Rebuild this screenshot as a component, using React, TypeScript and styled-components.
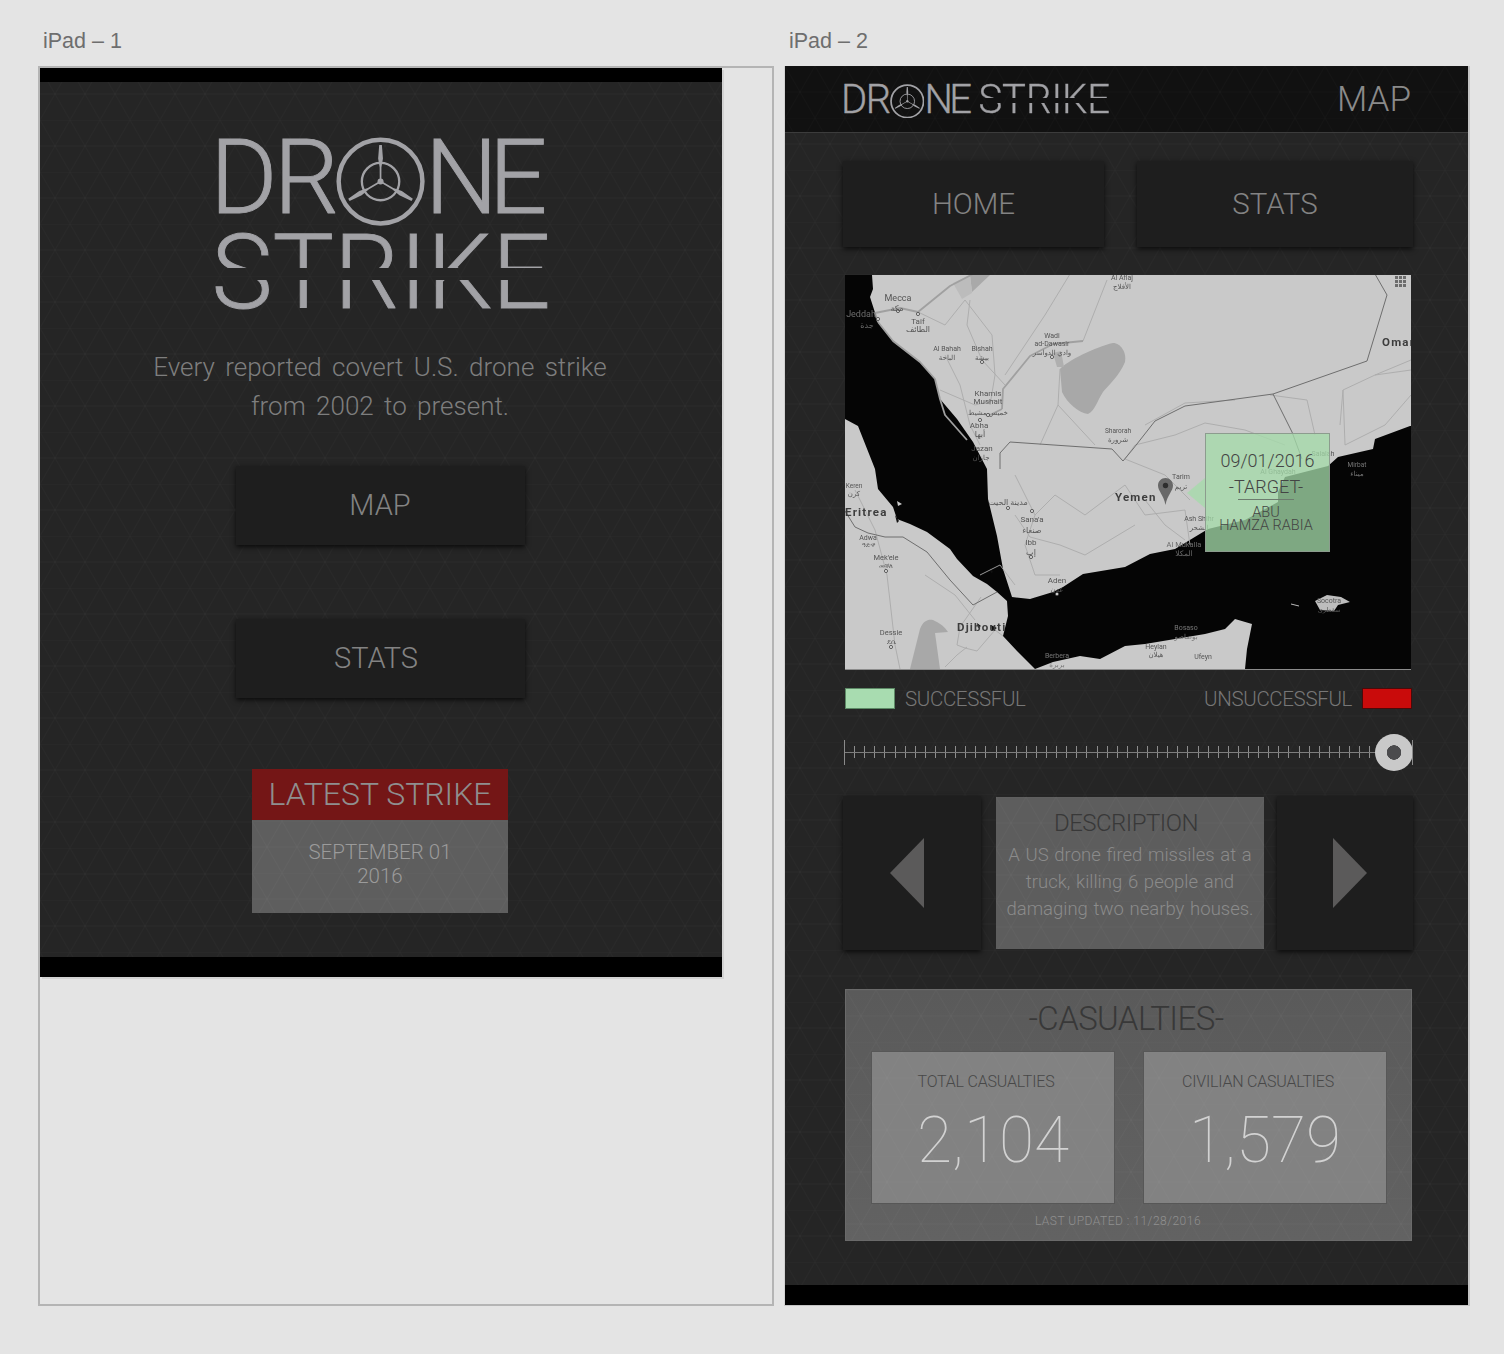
import React from "react";
import styled, { createGlobalStyle } from "styled-components";

const lattice = (alpha: number) =>
  `url("data:image/svg+xml,%3Csvg xmlns='http://www.w3.org/2000/svg' width='30' height='52'%3E%3Cpath d='M0 0L15 26L0 52M30 0L15 26L30 52M0 26H30M0 0H30' fill='none' stroke='%23fff' stroke-opacity='${alpha}'/%3E%3C/svg%3E")`;

const sans = `Roboto, "Liberation Sans", sans-serif`;

const GlobalStyle = createGlobalStyle`
  html, body {
    margin: 0;
    background: #e4e4e4;
  }
  body {
    font-family: ${sans};
  }
`;

const Page = styled.div`
  width: 1504px;
  height: 1354px;
  display: flex;
  padding-left: 38px;
  gap: 10px;
  box-sizing: border-box;
  overflow: hidden;
`;

const Board = styled.section<{ $width: number }>`
  width: ${p => p.$width}px;
  display: flex;
  flex-direction: column;
`;

const BoardName = styled.div`
  height: 66px;
  box-sizing: border-box;
  padding: 29px 0 0 5px;
  font-family: "Liberation Sans", sans-serif;
  font-size: 21.5px;
  line-height: 24px;
  color: #6e6e6e;
`;

const FrameOne = styled.div`
  height: 1240px;
  box-sizing: border-box;
  border: 2px solid #b4b4b4;
`;

const FrameTwo = styled.div`
  height: 1240px;
  box-sizing: border-box;
  border-left: 1px solid #d2d2d2;
  border-right: 2px solid #c4c4c4;
  border-bottom: 1px solid #c4c4c4;
`;

const Screen = styled.div`
  background-color: #252525;
  background-image: ${lattice(0.018)};
  display: flex;
  flex-direction: column;
`;

const HomeScreen = styled(Screen)`
  width: 682px;
  height: 909px;
  box-shadow: 2px 2px 0 #d2d2d2;
`;

const MapScreen = styled(Screen)`
  height: 100%;
`;

const BlackBar = styled.div<{ $height: number }>`
  height: ${p => p.$height}px;
  background: #000;
  flex: none;
`;

const HomeBody = styled.div`
  flex: 1;
  display: flex;
  flex-direction: column;
  align-items: center;
  padding-right: 2px;
`;

/* logo: the letters stay text, the STRIKE band is cut by a gradient clip */
const LogoBox = styled.div<{ $size: number; $row?: boolean }>`
  font-size: ${p => p.$size}px;
  display: flex;
  flex-direction: ${p => (p.$row ? "row" : "column")};
  align-items: center;
  font-weight: 300;
  color: #a2a2a6;
  line-height: 0.94;
  -webkit-text-stroke: 0.009em #a2a2a6;
`;

const DroneLine = styled.div<{ $row?: boolean }>`
  display: flex;
  align-items: center;
  height: 0.94em;
  margin-right: ${p => (p.$row ? 0 : 0.136)}em;
`;

const DroneLetters = styled.span<{ $spacing: number }>`
  letter-spacing: ${p => p.$spacing}em;
`;

const StrikeLine = styled.div<{ $row?: boolean }>`
  margin: ${p => (p.$row ? "0 0 0 0.25em" : "-0.02em 0 0")};
  height: 0.94em;
  color: transparent;
  -webkit-text-stroke: 0.009em transparent;
  background: linear-gradient(#a2a2a6 0 44%, transparent 44% 57%, #a2a2a6 57%);
  -webkit-background-clip: text;
  background-clip: text;
`;

const Wheel = styled.svg`
  width: 0.865em;
  height: 0.865em;
  margin-top: 0.06em;
  flex: none;
`;

const Blade = () => <path d="M48.500 9H51.500L52.700 24L51 34L50.900 50H49.100L49 34L47.300 24Z" />;

const PropellerMark = () => (
  <Wheel viewBox="0 0 100 100" fill="#a2a2a6">
    <circle cx="50" cy="50" r="47" fill="none" stroke="#a2a2a6" strokeWidth="5" />
    <circle cx="50" cy="50" r="21" fill="none" stroke="#a2a2a6" strokeWidth="2.600" />
    <Blade />
    <g transform="rotate(120 50 50)">
      <Blade />
    </g>
    <g transform="rotate(240 50 50)">
      <Blade />
    </g>
    <circle cx="50" cy="50" r="3.400" />
  </Wheel>
);

const Logo = ({ size, row }: { size: number; row?: boolean }) => (
  <LogoBox $size={size} $row={row}>
    <DroneLine $row={row}>
      <DroneLetters $spacing={-0.035}>DR</DroneLetters>
      <PropellerMark />
      <DroneLetters $spacing={-0.09}>NE</DroneLetters>
    </DroneLine>
    <StrikeLine $row={row}>STRIKE</StrikeLine>
  </LogoBox>
);

const HomeLogo = styled.div`
  margin: 48px 0 0 2px;
`;

const Tagline = styled.p`
  margin: 26px 0 0;
  font-size: 26px;
  font-weight: 300;
  line-height: 39px;
  word-spacing: 4px;
  text-align: center;
  color: #7e7e7e;
`;

const DarkButton = styled.div`
  background: #1e1e1e;
  box-shadow: 0 2px 5px rgba(0, 0, 0, 0.75);
  display: flex;
  align-items: center;
  justify-content: center;
  color: #838383;
  font-weight: 300;
  box-sizing: border-box;
`;

const HomeButton = styled(DarkButton)<{ $top: number; $nudge?: number }>`
  width: 289px;
  height: 79px;
  margin-top: ${p => p.$top}px;
  padding-right: ${p => p.$nudge || 0}px;
  font-size: 29px;
`;

const LatestCard = styled.div`
  width: 256px;
  height: 144px;
  margin-top: 71px;
  display: flex;
  flex-direction: column;
  background-color: #5e5e5e;
  background-image: ${lattice(0.025)};
`;

const LatestHead = styled.div`
  height: 51px;
  background: #741616;
  color: #8f8f8f;
  font-size: 32px;
  font-weight: 300;
  display: flex;
  align-items: center;
  justify-content: center;
`;

const LatestDate = styled.div`
  padding-top: 20px;
  text-align: center;
  font-size: 20.5px;
  line-height: 24px;
  font-weight: 300;
  color: #9b9b9b;
`;

const AppBar = styled.header`
  height: 67px;
  flex: none;
  box-sizing: border-box;
  padding: 2px 57px 0 56px;
  background-color: #111;
  background-image: ${lattice(0.015)};
  border-bottom: 1px solid #3c3c3c;
  display: flex;
  align-items: center;
  justify-content: space-between;
`;

const AppBarTitle = styled.div`
  font-size: 35px;
  font-weight: 300;
  color: #8a8a8a;
  margin-bottom: 2px;
`;

const MapBody = styled.div`
  width: 570px;
  margin-left: 58px;
  display: flex;
  flex-direction: column;
  flex: 1;
`;

const NavRow = styled.nav`
  display: flex;
  gap: 33px;
  margin-top: 28px;
`;

const NavButton = styled(DarkButton)<{ $width: number }>`
  width: ${p => p.$width}px;
  height: 86px;
  font-size: 29.5px;
`;

const MapFrame = styled.div`
  position: relative;
  width: 566px;
  height: 395px;
  margin: 28px 0 0 2px;
  flex: none;
  background: #c9c9c9;
  border-bottom: 1px solid #8c8c8c;
  box-sizing: border-box;
`;

const MapDrawing = styled.svg`
  display: block;
  width: 566px;
  height: 394px;
  filter: blur(0.35px);
`;

const Callout = styled.div`
  position: absolute;
  left: 360px;
  top: 158px;
  width: 125px;
  height: 119px;
  box-sizing: border-box;
  border: 1px solid #8c9c8e;
  background: rgba(164, 219, 170, 0.76);
  color: #444;
  text-align: center;
  font-weight: 300;
  padding-top: 16px;

  &::before {
    content: "";
    position: absolute;
    left: -19px;
    top: 44px;
    width: 18px;
    height: 30px;
    background: rgba(164, 219, 170, 0.76);
    clip-path: polygon(0 50%, 100% 0, 100% 100%);
  }
`;

const CalloutDate = styled.div`
  font-size: 18px;
  line-height: 22px;
`;

const CalloutTarget = styled.div`
  width: 56px;
  margin: 3px 0 0 32px;
  font-size: 18px;
  line-height: 24px;
  white-space: nowrap;
  display: flex;
  justify-content: center;
  border-bottom: 1px solid #6c7c6e;
`;

const CalloutName = styled.div`
  font-size: 14.5px;
  line-height: 13px;
  margin-top: 6px;
  padding-right: 3px;
`;

const Legend = styled.div`
  display: flex;
  align-items: center;
  gap: 10px;
  margin: 18px 1px 0 2px;
  height: 21px;
  font-size: 20.5px;
  font-weight: 300;
  letter-spacing: -0.35px;
  color: #777;
`;

const Swatch = styled.span<{ $fill: string; $edge: string }>`
  width: 50px;
  height: 21px;
  box-sizing: border-box;
  background: ${p => p.$fill};
  border: 1px solid ${p => p.$edge};
`;

const LegendGap = styled.span`
  flex: 1;
`;

const Slider = styled.div`
  position: relative;
  width: 569px;
  height: 25px;
  margin: 31px 0 0 1px;
  flex: none;
  background:
    linear-gradient(#7d7d7d, #7d7d7d) 0 12px / 100% 1px no-repeat,
    repeating-linear-gradient(90deg, #8d8d8d 0 1px, transparent 1px 10.1px) 0 6px / 100% 12px no-repeat;

  &::before,
  &::after {
    content: "";
    position: absolute;
    top: 0;
    width: 1px;
    height: 25px;
    background: #8a8a8a;
  }
  &::before {
    left: 0;
  }
  &::after {
    right: 0;
  }
`;

const SliderThumb = styled.div`
  position: absolute;
  right: 0;
  top: -6px;
  width: 38px;
  height: 37px;
  box-sizing: border-box;
  border-radius: 50%;
  background: radial-gradient(circle, #4b4b4d 0 7px, #c9c9c9 7.5px);
`;

const Carousel = styled.div`
  display: flex;
  margin-top: 31px;
  height: 154px;
  flex: none;
`;

const ArrowButton = styled(DarkButton)<{ $width: number; $side: "left" | "right" }>`
  width: ${p => p.$width}px;
  flex: none;
  padding-${p => (p.$side === "left" ? "right" : "left")}: 10px;
`;

const Triangle = styled.svg`
  width: 34px;
  height: 70px;
  fill: #5b5a5a;
`;

const Description = styled.div`
  width: 268px;
  height: 152px;
  margin: 1px 13px 0 15px;
  flex: none;
  box-sizing: border-box;
  padding-top: 11px;
  background-color: #5d5d5d;
  background-image: ${lattice(0.025)};
  text-align: center;
`;

const DescriptionTitle = styled.div`
  font-size: 24px;
  line-height: 30px;
  font-weight: 300;
  letter-spacing: -0.5px;
  margin-right: 8px;
  color: #383838;
`;

const DescriptionText = styled.div`
  margin-top: 4px;
  font-size: 18.5px;
  line-height: 27px;
  font-weight: 300;
  word-spacing: 1.2px;
  color: #8b8b8b;
  white-space: nowrap;
`;

const CasualtyPanel = styled.div`
  width: 567px;
  height: 252px;
  margin: 39px 0 0 2px;
  flex: none;
  box-sizing: border-box;
  padding: 10px 24px 0 25px;
  background-color: #5b5b5b;
  background-image: ${lattice(0.025)}, linear-gradient(#5a5a5a, #626262);
  border: 1px solid #6a6a6a;
`;

const PanelTitle = styled.div`
  font-size: 33px;
  line-height: 38px;
  font-weight: 300;
  letter-spacing: -0.6px;
  text-align: center;
  margin-right: 6px;
  color: #383838;
`;

const CardRow = styled.div`
  display: flex;
  gap: 28px;
  margin-top: 13px;
`;

const CasualtyCard = styled.div`
  width: 244px;
  height: 153px;
  box-sizing: border-box;
  border: 1px solid #575757;
  padding-top: 20px;
  background-color: #828282;
  background-image: ${lattice(0.02)};
  text-align: center;
`;

const CardLabel = styled.div`
  font-size: 16px;
  line-height: 20px;
  font-weight: 300;
  letter-spacing: -0.2px;
  color: #484848;
  margin-right: 14px;
`;

const CardNumber = styled.div`
  margin-top: 11px;
  font-size: 64px;
  line-height: 76px;
  font-weight: 100;
  color: #d2d2d2;
`;

const Updated = styled.div`
  margin: 9px 22px 0 0;
  font-size: 12px;
  line-height: 16px;
  font-weight: 300;
  letter-spacing: 0.5px;
  text-align: center;
  color: #909090;
`;

const BottomBar = styled(BlackBar)`
  margin-top: auto;
`;

const seaPath =
  "M0 0L27 0L28 14L25 22L33 47L48 66L75 87L90 104L95 124L112 144L128 167L142 194L143 224L152 261L158 294L167 322L185 324L208 317L218 312L238 299L280 292L305 279L330 274L363 254L400 245L433 227L433 217L440 202L483 191L493 182L528 174L530 164L565 151L566 151L566 394L400 394L402 374L407 349L390 344L380 354L360 359L330 364L300 369L280 371L255 384L235 381L208 387L190 394L172 376L158 361L163 341L162 326L152 317L142 309L128 301L112 284L105 274L82 257L65 249L52 244L48 232L33 214L30 194L13 151L0 144Z";

const borders = [
  "530,-1 542,20 522,86 428,119 340,131 310,146 288,174 278,186 267,174 165,167 155,178 155,194",
  "428,119 447,157 457,184",
  "0,236 10,252 23,258 40,262 58,262 82,277 105,305 128,330 152,317",
];

const roads = [
  "33,47 30,38 55,33 73,37 105,11 128,-1",
  "33,47 48,66 75,87 90,104 95,124 100,140 122,165",
  "157,134 158,114 185,81 208,69 238,66",
  "157,134 145,140",
];

const tracks = [
  "73,37 100,50 120,25 147,60 150,100 145,130",
  "125,25 122,50 137,85 160,110",
  "160,100 200,40 225,-1",
  "238,66 262,5",
  "215,94 213,130 195,170",
  "213,130 250,170",
  "100,80 115,110 125,150 135,170",
  "95,115 130,130 150,125",
  "300,150 340,128 390,125",
  "280,184 290,170 330,160 360,148 400,155 440,170",
  "425,120 462,125 470,160",
  "500,170 498,115 530,100 566,95",
  "498,115 495,150",
  "500,170 540,150 566,120",
  "530,100 566,85",
  "170,200 190,240 210,220 240,240 280,210 300,240 340,235 345,270",
  "170,240 185,262 215,270 240,280 290,250",
  "190,240 180,270 190,300 215,300",
  "10,215 30,255 42,300 50,370 55,394",
  "80,300 110,320 130,345",
  "135,300 155,290 170,310",
  "280,184 320,200 345,225",
  "300,225 320,250 340,265",
  "136,322 115,352 112,370 120,373 132,376 150,355 158,361",
  "122,372 112,380 100,392",
];

type MapLabel = [string, number, number, number?, string?];

const placeNames: MapLabel[] = [
  ["Mecca", 53, 26, 9],
  ["مكة", 52, 36, 8],
  ["Jeddah", 16, 42, 9, "#6d6d6d"],
  ["جدة", 22, 53, 8, "#6d6d6d"],
  ["Taif", 73, 49, 8],
  ["الطائف", 73, 57, 8],
  ["Al Bahah", 102, 76, 7],
  ["الباحة", 102, 85, 7],
  ["Bishah", 137, 76, 7],
  ["بيشة", 137, 85, 7],
  ["Wadi", 207, 63, 7],
  ["ad-Dawasir", 207, 71, 7],
  ["وادي الدواسر", 207, 80, 7],
  ["Khamis", 143, 121, 8],
  ["Mushait", 143, 129, 8],
  ["خميس مشيط", 143, 140, 7],
  ["Abha", 134, 153, 8],
  ["أبها", 135, 162, 8],
  ["Jazan", 137, 176, 8],
  ["جازان", 136, 185, 7],
  ["Sharorah", 273, 158, 6.5],
  ["شرورة", 273, 167, 7],
  ["Al Aflaj", 277, 5, 7],
  ["الأفلاج", 277, 14, 7],
  ["Salalah", 478, 181, 7],
  ["Al Ghaydah", 433, 199, 7],
  ["Tarim", 336, 204, 7],
  ["تريم", 336, 214, 7],
  ["Keren", 9, 213, 6.5],
  ["كرن", 9, 221, 7],
  ["Adwa", 23, 265, 7],
  ["ዓድዋ", 23, 272, 6.5],
  ["Mek'ele", 41, 285, 7.5],
  ["መቐለ", 41, 293, 6.5],
  ["Dessie", 46, 360, 7.5],
  ["ደሴ", 46, 369, 7],
  ["مدينة الحيت", 163, 230, 8],
  ["Sana'a", 187, 247, 8],
  ["صنعاء", 187, 258, 8],
  ["Ibb", 186, 270, 8],
  ["إب", 186, 280, 8],
  ["Aden", 212, 308, 8],
  ["عدن", 212, 317, 7],
  ["Berbera", 212, 383, 7, "#777"],
  ["بربرة", 212, 392, 7, "#777"],
  ["Ash Shihr", 354, 246, 7],
  ["الشحر", 354, 255, 7],
  ["Al Mukalla", 339, 272, 7.5, "#6b6b6b"],
  ["المكلا", 339, 281, 7.5, "#6b6b6b"],
  ["Mirbat", 512, 192, 6.5, "#777"],
  ["ميناء", 512, 201, 7, "#777"],
  ["Socotra", 484, 328, 7],
  ["سقطرى", 484, 337, 6.5],
  ["Bosaso", 341, 355, 7, "#777"],
  ["بوصاصو", 341, 364, 7, "#777"],
  ["Heylan", 311, 374, 7],
  ["هيلان", 311, 382, 7],
  ["Ufeyn", 358, 384, 7],
];

const countryNames: MapLabel[] = [
  ["Oman", 537, 71],
  ["Yemen", 270, 226],
  ["Eritrea", 0, 241],
  ["Djibouti", 112, 356],
];

const townDots = [
  [53, 36], [33, 44], [73, 39], [137, 87], [135, 145], [143, 140], [207, 82], [163, 233], [187, 236], [186, 282], [212, 319], [41, 296], [46, 372],
];

const MapLabels = styled.g`
  font-family: Roboto, "DejaVu Sans", sans-serif;
  text-anchor: middle;
`;

const CountryLabels = styled.g`
  font-family: Roboto, sans-serif;
  font-size: 11.5px;
  font-weight: 700;
  letter-spacing: 1.2px;
  fill: #3d3d3d;
`;

const YemenMap = () => (
  <MapDrawing viewBox="0 0 566 394">
    <rect width="566" height="394" fill="#c9c9c9" />
    <path d="M125 0h20l-18 17z" fill="#a9a9a9" />
    <path d="M108 8l17-8 2 18-10 6z" fill="#bcbcbc" />
    <path d="M215 94C222 86 250 72 268 68C276 68 282 78 280 87C275 100 262 112 258 117C252 126 250 136 243 139C234 138 222 128 217 117Z" fill="#a8a8a8" />
    <path d="M65 394L75 354C78 346 83 344 88 345C95 348 100 352 103 357L90 358L95 394Z" fill="#a8a8a8" />
    <path d="M208 78l8-2 3 16h-7z" fill="#afafaf" />
    <path d={seaPath} fill="#050505" />
    <path d="M470 326l12-6 14 2 9 5-12 3-4 6-14-1z" fill="#bdbdbd" />
    <path d="M446 329l8 2" stroke="#bbb" strokeWidth="1" />
    <path d="M25 204l3 3-2 2zM52 226l5 3-4 2zM150 181l3 6-4 1z" fill="#c9c9c9" />
    <path d="M50 240l4 6-2 2zM145 292l3 5-2 1zM132 348l4 3-3 2zM146 350l6 3-5 3z" fill="#111" />
    <g fill="none" strokeLinejoin="round">
      {tracks.map(points => (
        <polyline key={points} points={points} stroke="#aaa" strokeWidth="0.9" />
      ))}
      {roads.map(points => (
        <polyline key={points} points={points} stroke="#a0a0a0" strokeWidth="1.800" />
      ))}
      {borders.map(points => (
        <polyline key={points} points={points} stroke="#6e6e6e" strokeWidth="1" />
      ))}
    </g>
    {townDots.map(([x, y]) => (
      <circle key={`${x}-${y}`} cx={x} cy={y} r="1.600" fill="#d8d8d8" stroke="#444" strokeWidth="0.8" />
    ))}
    <MapLabels>
      {placeNames.map(([name, x, y, size, tone]) => (
        <text key={name} x={x} y={y} fontSize={size} fill={tone || "#555"}>
          {name}
        </text>
      ))}
    </MapLabels>
    <CountryLabels>
      {countryNames.map(([name, x, y]) => (
        <text key={name} x={x} y={y}>
          {name}
        </text>
      ))}
    </CountryLabels>
    <g transform="translate(313 203)">
      <path d="M7.500 0C3.300 0 0 3.300 0 7.500c0 5.500 5.500 9 7.500 19.500C9.500 16.500 15 13 15 7.500 15 3.300 11.700 0 7.500 0z" fill="#686868" />
      <circle cx="7.500" cy="7.500" r="2.700" fill="#2e2e2e" />
    </g>
    <g fill="#6c6c6c">
      {[0, 4, 8].map(y =>
        [550, 554, 558].map(x => <rect key={`${x}-${y}`} x={x} y={y + 1} width="3" height="3" />)
      )}
    </g>
  </MapDrawing>
);

export default function App() {
  return (
    <Page>
      <GlobalStyle />
      <Board $width={736}>
        <BoardName>iPad – 1</BoardName>
        <FrameOne>
          <HomeScreen>
            <BlackBar $height={14} />
            <HomeBody>
              <HomeLogo>
                <Logo size={103} />
              </HomeLogo>
              <Tagline>
                Every reported covert U.S. drone strike
                <br />
                from 2002 to present.
              </Tagline>
              <HomeButton $top={40}>MAP</HomeButton>
              <HomeButton $top={74} $nudge={8}>
                STATS
              </HomeButton>
              <LatestCard>
                <LatestHead>LATEST STRIKE</LatestHead>
                <LatestDate>
                  SEPTEMBER 01
                  <br />
                  2016
                </LatestDate>
              </LatestCard>
            </HomeBody>
            <BlackBar $height={20} />
          </HomeScreen>
        </FrameOne>
      </Board>
      <Board $width={686}>
        <BoardName>iPad – 2</BoardName>
        <FrameTwo>
          <MapScreen>
            <AppBar>
              <Logo size={40} row />
              <AppBarTitle>MAP</AppBarTitle>
            </AppBar>
            <MapBody>
              <NavRow>
                <NavButton $width={261}>HOME</NavButton>
                <NavButton $width={276}>STATS</NavButton>
              </NavRow>
              <MapFrame>
                <YemenMap />
                <Callout>
                  <CalloutDate>09/01/2016</CalloutDate>
                  <CalloutTarget>-TARGET-</CalloutTarget>
                  <CalloutName>
                    ABU
                    <br />
                    HAMZA RABIA
                  </CalloutName>
                </Callout>
              </MapFrame>
              <Legend>
                <Swatch $fill="#a8dcb0" $edge="#5d8a66" />
                <span>SUCCESSFUL</span>
                <LegendGap />
                <span>UNSUCCESSFUL</span>
                <Swatch $fill="#c90b0b" $edge="#4a0a0a" />
              </Legend>
              <Slider>
                <SliderThumb />
              </Slider>
              <Carousel>
                <ArrowButton $width={138} $side="left">
                  <Triangle viewBox="0 0 34 70">
                    <path d="M34 0V70L0 35Z" />
                  </Triangle>
                </ArrowButton>
                <Description>
                  <DescriptionTitle>DESCRIPTION</DescriptionTitle>
                  <DescriptionText>
                    A US drone fired missiles at a
                    <br />
                    truck, killing 6 people and
                    <br />
                    damaging two nearby houses.
                  </DescriptionText>
                </Description>
                <ArrowButton $width={136} $side="right">
                  <Triangle viewBox="0 0 34 70">
                    <path d="M0 0V70L34 35Z" />
                  </Triangle>
                </ArrowButton>
              </Carousel>
              <CasualtyPanel>
                <PanelTitle>-CASUALTIES-</PanelTitle>
                <CardRow>
                  <CasualtyCard>
                    <CardLabel>TOTAL CASUALTIES</CardLabel>
                    <CardNumber>2,104</CardNumber>
                  </CasualtyCard>
                  <CasualtyCard>
                    <CardLabel>CIVILIAN CASUALTIES</CardLabel>
                    <CardNumber>1,579</CardNumber>
                  </CasualtyCard>
                </CardRow>
                <Updated>LAST UPDATED : 11/28/2016</Updated>
              </CasualtyPanel>
            </MapBody>
            <BottomBar $height={20} />
          </MapScreen>
        </FrameTwo>
      </Board>
    </Page>
  );
}
